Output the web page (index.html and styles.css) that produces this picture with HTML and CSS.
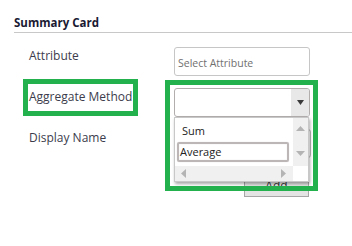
FILE: index.html
```html
<!DOCTYPE html>
<html>
<head>
<meta charset="utf-8">
<link rel="stylesheet" href="styles.css">
</head>
<body>
<div class="card">
  <h2 class="title">Summary Card</h2>
  <div class="form">
    <div class="label">Attribute</div>
    <div class="input"><span class="placeholder">Select Attribute</span></div>

    <div class="label">Aggregate Method</div>
    <div class="select">
      <span class="value"></span>
      <span class="arrow"><svg width="7" height="5" viewBox="0 0 7 5"><path d="M0 0H7L3.5 5Z" fill="#3a3a3a"/></svg></span>
      <div class="listbox">
        <div class="list-main">
          <div class="items">
            <div class="item">Sum</div>
            <div class="item selected">Average</div>
          </div>
          <div class="vscroll">
            <svg width="9" height="5" viewBox="0 0 9 5"><path d="M0 5H9L4.5 0Z" fill="#b4b4b4"/></svg>
            <svg width="9" height="5" viewBox="0 0 9 5"><path d="M0 0H9L4.5 5Z" fill="#b4b4b4"/></svg>
          </div>
        </div>
        <div class="list-bottom">
          <div class="hscroll">
            <svg width="5" height="9" viewBox="0 0 5 9"><path d="M5 0V9L0 4.5Z" fill="#b4b4b4"/></svg>
            <svg width="5" height="9" viewBox="0 0 5 9"><path d="M0 0V9L5 4.5Z" fill="#b4b4b4"/></svg>
          </div>
          <div class="corner"></div>
        </div>
      </div>
    </div>

    <div class="label">Display Name</div>
    <div class="input input-wide"></div>

    <div class="spacer"></div>
    <div class="actions"><button class="btn">Add</button></div>
  </div>
  <div class="mark mark-label"></div>
  <div class="mark mark-field"></div>
</div>
</body>
</html>
```
FILE: styles.css
```css
html, body {
  margin: 0;
  padding: 0;
  background: #ffffff;
}
body {
  width: 352px;
  height: 246px;
  overflow: hidden;
  font-family: "Open Sans", "Noto Sans", sans-serif;
}
.card {
  position: relative;
  padding-left: 14px;
}
.title {
  margin: 0;
  padding-top: 15px;
  padding-bottom: 1px;
  font-size: 11.5px;
  line-height: 16px;
  font-weight: 700;
  color: #1a1a33;
  border-bottom: 1px solid #c8c8c8;
}
.form {
  display: grid;
  grid-template-columns: 145px 136px;
  grid-auto-rows: 29px;
  row-gap: 12px;
  margin-top: 14px;
  padding-left: 15px;
}
.label {
  font-size: 12px;
  line-height: 16px;
  color: #3c3c4c;
  padding-top: 1px;
}
.input {
  box-sizing: border-box;
  border: 1px solid #c6c6c6;
  border-radius: 3px;
  display: flex;
  align-items: center;
  padding-left: 3px;
  padding-top: 2px;
  background: #fff;
}
.input-wide {
  width: 137px;
  border-color: #b8b8b8;
}
.placeholder {
  font-size: 10.5px;
  color: #707070;
}
.select {
  position: relative;
  box-sizing: border-box;
  border: 1px solid #b2aeae;
  border-radius: 3px;
  display: flex;
  background: #fff;
}
.value {
  flex: 1;
}
.arrow {
  width: 18px;
  background: #e8e8e8;
  display: flex;
  align-items: center;
  justify-content: center;
  border-radius: 0 2px 2px 0;
}
.listbox {
  position: absolute;
  left: -1px;
  top: 28px;
  width: 135px;
  height: 65px;
  box-sizing: border-box;
  border: 1px solid #c8c8c8;
  background: #fff;
  box-shadow: 1px 2px 3px rgba(0, 0, 0, 0.35);
  display: flex;
  flex-direction: column;
  z-index: 2;
}
.list-main {
  flex: 1;
  display: flex;
  min-height: 0;
}
.items {
  flex: 1;
  padding: 3px 0 0 2px;
  overflow: hidden;
}
.item {
  font-size: 11px;
  line-height: 20px;
  height: 20px;
  padding-left: 5px;
  color: #222;
}
.item.selected {
  box-sizing: border-box;
  border: 2px solid #bdb6b6;
  border-radius: 2px;
  box-shadow: inset 0 0 1px rgba(0,0,0,0.2), 0 0 1px rgba(0,0,0,0.2);
  width: 112px;
  padding-left: 1px;
  line-height: 16px;
  margin-top: 1px;
}
.vscroll {
  width: 15px;
  background: #f0f0f0;
  display: flex;
  flex-direction: column;
  align-items: center;
  justify-content: space-between;
  padding: 8px 0 10px;
  box-sizing: border-box;
}
.list-bottom {
  height: 15px;
  display: flex;
}
.hscroll {
  flex: 1;
  background: #f0f0f0;
  display: flex;
  align-items: center;
  justify-content: space-between;
  padding: 0 7px 0 6px;
}
.corner {
  width: 15px;
  background: #fff;
}
.spacer {
  grid-row: 4;
}
.actions {
  grid-row: 4;
  grid-column: 2;
  padding-top: 4px;
  height: 23px;
}
.btn {
  display: block;
  margin-left: 70px;
  width: 65px;
  height: 23px;
  box-sizing: border-box;
  border: 1px solid #a6a6a6;
  background: #e4e4e4;
  font-family: "Open Sans", "Noto Sans", sans-serif;
  font-size: 12px;
  color: #333;
  padding: 0;
}
.mark {
  position: absolute;
  box-sizing: border-box;
  border: 5px solid #22b14c;
  z-index: 3;
}
.mark-label {
  left: 23px;
  top: 79px;
  width: 115px;
  height: 37px;
}
.mark-field {
  left: 165px;
  top: 80px;
  width: 153px;
  height: 111px;
}
```
